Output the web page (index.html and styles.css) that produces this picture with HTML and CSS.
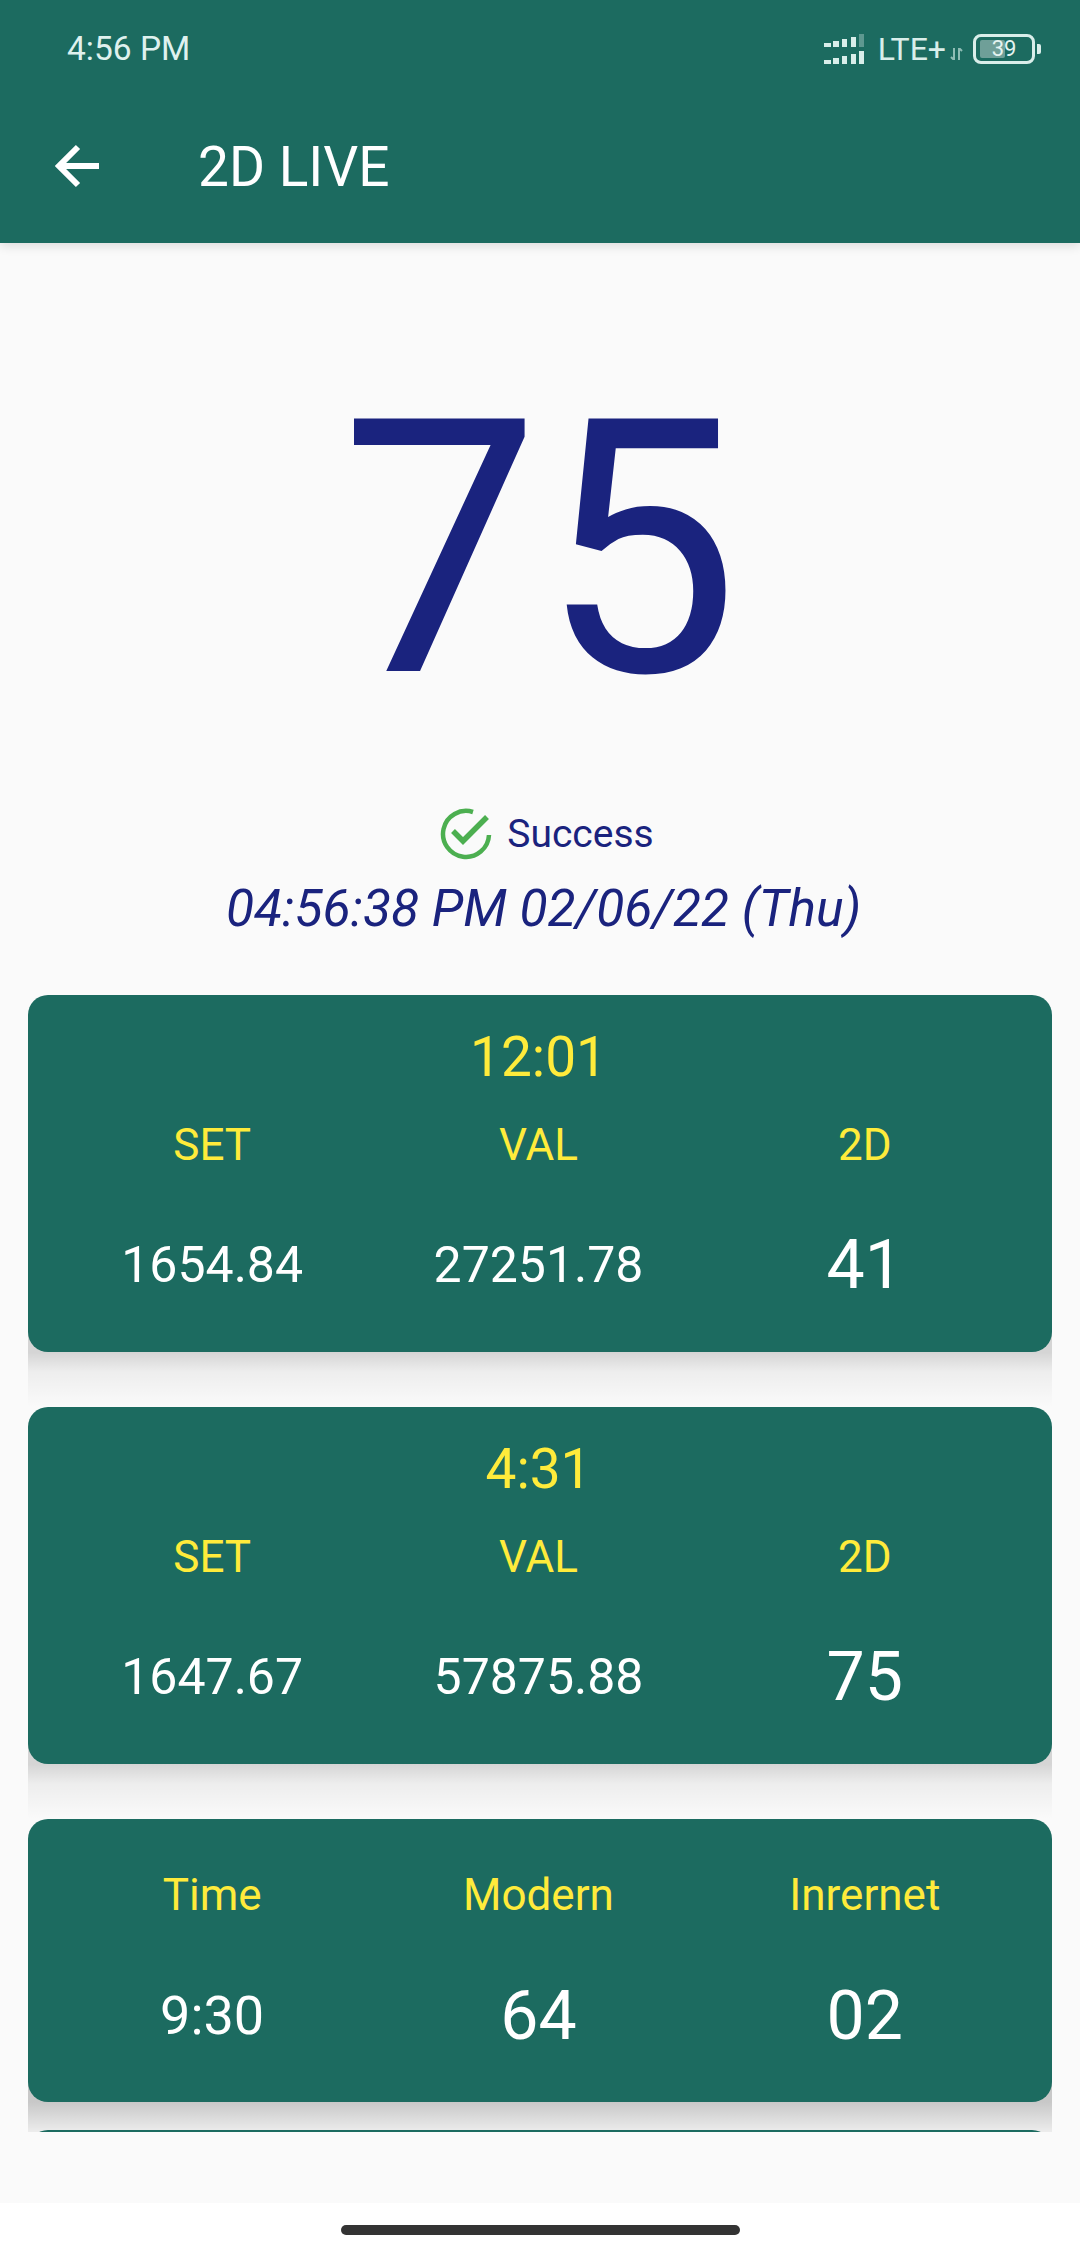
FILE: index.html
```html
<!DOCTYPE html>
<html>
<head>
    <meta charset="UTF-8">
    <meta name="viewport" content="width=device-width, initial-scale=1.0">
    <title>2D Live</title>
    <link rel="stylesheet" href="styles.css">
</head>
<body>
    <div class="app">
        <header class="app-header">
            <div class="status-bar">
                <span class="status-time">4:56 PM</span>
                <div class="status-icons">
                    <svg class="signal" width="40" height="30" viewBox="0 0 40 30">
                        <g fill="#d9eeea">
                            <rect x="0" y="9" width="7" height="4"/>
                            <rect x="9" y="7" width="6" height="6"/>
                            <rect x="18" y="5" width="5" height="8"/>
                            <rect x="27" y="3" width="5" height="10"/>
                            <rect x="35" y="0" width="5" height="13" opacity="0.35"/>
                            <rect x="0" y="26" width="7" height="4"/>
                            <rect x="9" y="24" width="6" height="6"/>
                            <rect x="18" y="22" width="5" height="8"/>
                            <rect x="27" y="20" width="5" height="10"/>
                            <rect x="35" y="17" width="5" height="13"/>
                        </g>
                    </svg>
                    <span class="status-net">LTE+</span>
                    <svg class="net-arrows" width="13" height="12" viewBox="0 0 13 12">
                        <path d="M4 0v12M1 9l3 3M9 12V0M9 0l3 3" stroke="#8fbdb5" stroke-width="2" fill="none"/>
                    </svg>
                    <div class="battery">
                        <div class="battery-body">
                            <div class="battery-level"></div>
                            <span class="battery-text">39</span>
                        </div>
                        <div class="battery-tip"></div>
                    </div>
                </div>
            </div>
            <div class="toolbar">
                <svg class="back-icon" width="46" height="44" viewBox="0 0 46 44">
                    <path d="M44 22H5M23 3L4 22l19 19" stroke="#fff" stroke-width="6" fill="none"/>
                </svg>
                <span class="toolbar-title">2D LIVE</span>
            </div>
        </header>

        <main class="content">
            <div class="live-number">75</div>
            <div class="status-row">
                <svg class="check-icon" width="52" height="52" viewBox="0 0 52 52">
                    <path d="M33 4A23 23 0 1 0 49 27" stroke="#4caf50" stroke-width="4.500" fill="none"/>
                    <path d="M13 23l10 10L47 9" stroke="#4caf50" stroke-width="5.500" fill="none"/>
                </svg>
                <span class="status-text">Success</span>
            </div>
            <div class="live-date">04:56:38 PM 02/06/22 (Thu)</div>

            <section class="card">
                <div class="card-time">12:01</div>
                <div class="card-row card-labels">
                    <span>SET</span>
                    <span>VAL</span>
                    <span>2D</span>
                </div>
                <div class="card-row card-values">
                    <span>1654.84</span>
                    <span>27251.78</span>
                    <span class="big">41</span>
                </div>
            </section>

            <section class="card">
                <div class="card-time">4:31</div>
                <div class="card-row card-labels">
                    <span>SET</span>
                    <span>VAL</span>
                    <span>2D</span>
                </div>
                <div class="card-row card-values">
                    <span>1647.67</span>
                    <span>57875.88</span>
                    <span class="big">75</span>
                </div>
            </section>

            <section class="card card-plain">
                <div class="card-row card-labels">
                    <span>Time</span>
                    <span>Modern</span>
                    <span>Inrernet</span>
                </div>
                <div class="card-row card-values">
                    <span>9:30</span>
                    <span class="big">64</span>
                    <span class="big">02</span>
                </div>
            </section>

            <section class="card card-cut"></section>
        </main>

        <div class="bottom-gap"></div>
        <footer class="nav-bar">
            <div class="home-pill"></div>
        </footer>
    </div>
</body>
</html>
```

FILE: styles.css
```css
body {
    margin: 0;
    padding: 0;
    font-family: Roboto, Arial, sans-serif;
    background-color: #ffffff;
}
.app {
    width: 1080px;
    height: 2248px;
    display: flex;
    flex-direction: column;
    overflow: hidden;
}
.app-header {
    position: relative;
    z-index: 1;
    height: 243px;
    flex-shrink: 0;
    background-color: #1c6b60;
    box-shadow: 0 3px 10px rgba(0, 0, 0, 0.12);
    display: flex;
    flex-direction: column;
}
.status-bar {
    height: 95px;
    box-sizing: border-box;
    padding: 2px 39px 0 67px;
    display: flex;
    align-items: center;
    justify-content: space-between;
}
.status-time {
    font-size: 33.500px;
    color: #dff1ee;
}
.status-icons {
    display: flex;
    align-items: center;
}
.signal {
    margin-right: 14px;
}
.status-net {
    font-size: 32px;
    color: #d9eeea;
}
.net-arrows {
    margin: 10px 10px 0 4px;
}
.battery {
    display: flex;
    align-items: center;
}
.battery-body {
    position: relative;
    width: 62px;
    height: 30px;
    box-sizing: border-box;
    border: 3px solid #d9eeea;
    border-radius: 8px;
    padding: 3px 4px;
}
.battery-level {
    width: 25px;
    height: 100%;
    background-color: #6f9f98;
    border-radius: 2px;
}
.battery-text {
    position: absolute;
    top: 0;
    left: 0;
    width: 100%;
    text-align: center;
    font-size: 22px;
    line-height: 24px;
    color: #e4f3f0;
}
.battery-tip {
    width: 4px;
    height: 10px;
    margin-left: 2px;
    background-color: #d9eeea;
    border-radius: 0 2px 2px 0;
}
.toolbar {
    flex: 1;
    display: flex;
    align-items: center;
    padding: 0 0 6px 55px;
}
.toolbar-title {
    margin: 2px 0 0 97px;
    font-size: 55px;
    color: #ffffff;
}
.content {
    position: relative;
    z-index: 0;
    height: 1889px;
    flex-shrink: 0;
    box-sizing: border-box;
    padding: 0 28px;
    background-color: #fafafa;
    overflow: hidden;
    display: flex;
    flex-direction: column;
}
.live-number {
    height: 466px;
    padding-top: 74px;
    flex-shrink: 0;
    text-align: center;
    font-size: 355px;
    line-height: 466px;
    color: #1a237e;
}
.status-row {
    height: 52px;
    margin-top: 25px;
    padding-left: 14px;
    flex-shrink: 0;
    display: flex;
    align-items: center;
    justify-content: center;
}
.status-text {
    margin-left: 15px;
    font-size: 39px;
    color: #1a237e;
}
.live-date {
    height: 62px;
    margin-top: 18px;
    padding-left: 7px;
    flex-shrink: 0;
    text-align: center;
    font-size: 51.500px;
    line-height: 62px;
    font-style: italic;
    color: #1a237e;
}
.card {
    position: relative;
    flex-shrink: 0;
    height: 357px;
    margin-top: 55px;
    box-sizing: border-box;
    padding: 28px 24px 0 21px;
    background-color: #1c6b60;
    border-radius: 20px;
}
/* flat strip under the card instead of a normal shadow */
.card::after {
    content: "";
    position: absolute;
    z-index: -1;
    left: 0;
    right: 0;
    top: calc(100% - 20px);
    height: 75px;
    background: linear-gradient(rgba(0, 0, 0, 0.15) 27%, rgba(0, 0, 0, 0.05) 53%, rgba(0, 0, 0, 0));
}
.card-time {
    height: 68px;
    text-align: center;
    font-size: 55px;
    line-height: 68px;
    color: #ffeb3b;
}
.card-row {
    display: grid;
    grid-template-columns: repeat(3, 1fr);
    text-align: center;
}
.card-labels {
    margin-top: 24px;
    font-size: 44px;
    line-height: 60px;
    color: #ffeb3b;
}
.card-values {
    margin-top: 60px;
    height: 60px;
    font-size: 50px;
    line-height: 60px;
    color: #ffffff;
}
.big {
    font-size: 68px;
}
.card-plain {
    height: 283px;
    padding-top: 22px;
}
.card-plain::after {
    background: linear-gradient(rgba(0, 0, 0, 0.2) 27%, rgba(0, 0, 0, 0.06) 65%, rgba(0, 0, 0, 0));
}
.card-plain .card-values {
    margin-top: 61px;
    font-size: 54px;
}
.card-plain .card-values .big {
    font-size: 68px;
}
.card-cut {
    margin-top: 28px;
}
.bottom-gap {
    height: 71px;
    flex-shrink: 0;
    background-color: #fafafa;
}
.nav-bar {
    flex: 1;
    display: flex;
    align-items: center;
    justify-content: center;
    background-color: #ffffff;
}
.home-pill {
    width: 399px;
    height: 10px;
    margin-top: 8px;
    background-color: #333333;
    border-radius: 5px;
}
```
